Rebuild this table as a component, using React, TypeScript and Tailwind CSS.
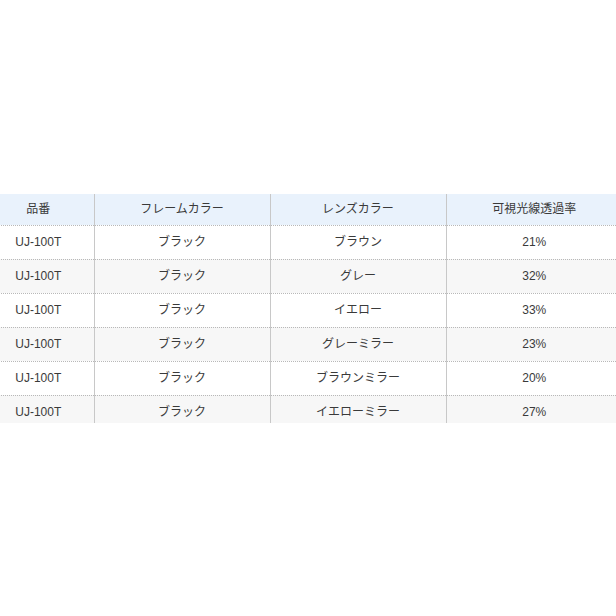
const rows = [
  { lens: 'ブラウン', rate: '21%' },
  { lens: 'グレー', rate: '32%' },
  { lens: 'イエロー', rate: '33%' },
  { lens: 'グレーミラー', rate: '23%' },
  { lens: 'ブラウンミラー', rate: '20%' },
  { lens: 'イエローミラー', rate: '27%' },
];

const cell = 'border-b border-l border-b-[#b8b8b8] border-l-[#c8c8c8] [border-bottom-style:dotted] text-center';
const first = 'border-b border-b-[#b8b8b8] [border-bottom-style:dotted] text-center';

export default function App() {
  return (
    <div className="h-[616px] w-[616px] overflow-hidden bg-white pt-[194px] font-['Liberation_Sans','Noto_Sans_CJK_JP',sans-serif] text-[12px] text-[#3a3a3a]">
      <div className="ml-[-17px] h-[229px] w-[639px] overflow-hidden">
        <table className="w-full table-fixed border-collapse">
          <colgroup>
            <col className="w-[111px]" />
            <col className="w-[176px]" />
            <col className="w-[176px]" />
            <col className="w-[176px]" />
          </colgroup>
          <thead>
            <tr className="h-[31px] bg-[#e9f2fc]">
              <th className={`${first} font-normal`}>品番</th>
              <th className={`${cell} font-normal`}>フレームカラー</th>
              <th className={`${cell} font-normal`}>レンズカラー</th>
              <th className={`${cell} font-normal`}>可視光線透過率</th>
            </tr>
          </thead>
          <tbody>
            {rows.map((r, i) => (
              <tr key={r.lens} className={`h-[34px] ${i % 2 ? 'bg-[#f7f7f7]' : 'bg-white'}`}>
                <td className={first}>UJ-100T</td>
                <td className={cell}>ブラック</td>
                <td className={cell}>{r.lens}</td>
                <td className={cell}>{r.rate}</td>
              </tr>
            ))}
          </tbody>
        </table>
      </div>
    </div>
  );
}
